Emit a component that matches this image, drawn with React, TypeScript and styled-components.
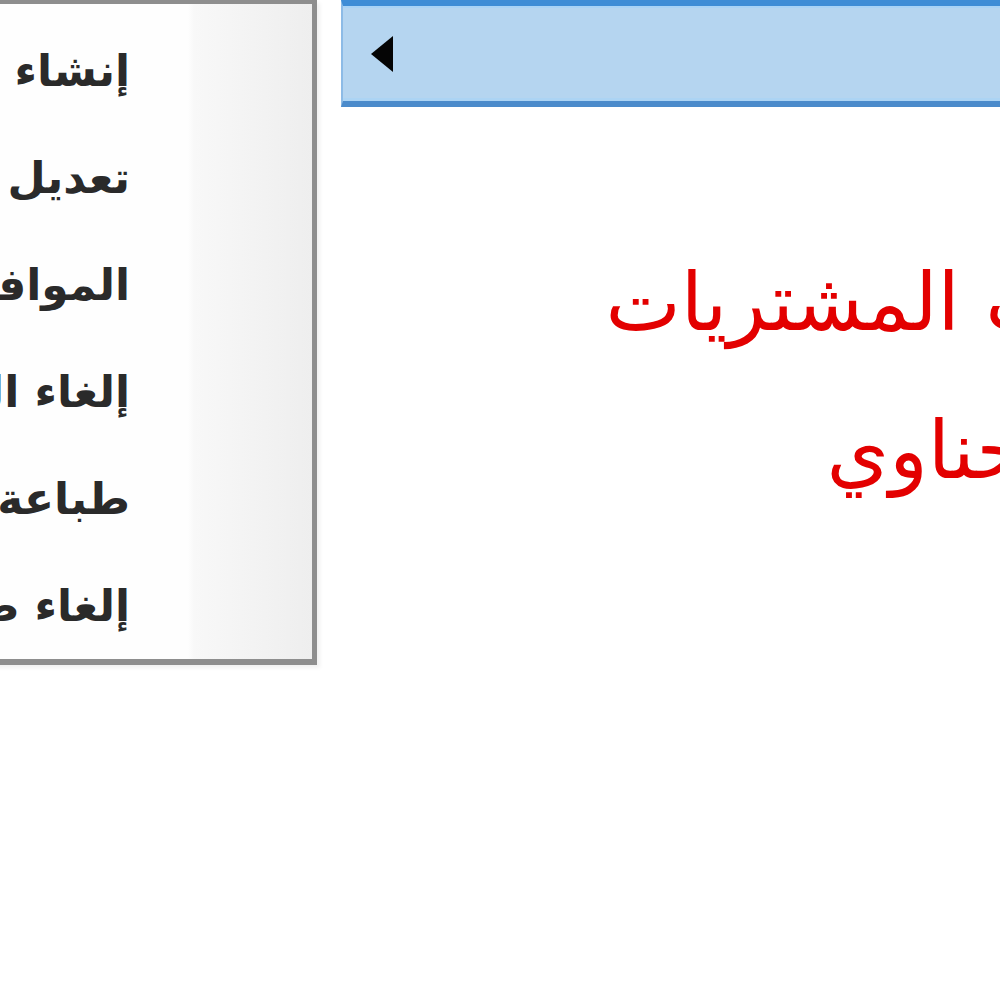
import styled, { createGlobalStyle } from "styled-components"

const Global = createGlobalStyle`
  html, body {
    margin: 0;
    padding: 0;
    background: #ffffff;
    overflow: hidden;
  }
`

const Page = styled.div`
  display: flex;
  align-items: flex-start;
  width: 1000px;
  height: 1000px;
  overflow: hidden;
  background: #ffffff;
`

const Menu = styled.div`
  flex: none;
  width: 452px;
  margin-left: -144px;
  border: 4px solid #8e8e8e;
  border-right-width: 5px;
  border-bottom-width: 6px;
  padding-top: 13px;
  background: linear-gradient(
    to right,
    #fefefe 0,
    #fefefe 328px,
    #f8f8f8 334px,
    #eeeeee 100%
  );
  box-shadow: 3px 3px 4px rgba(0, 0, 0, 0.06);
`

const Item = styled.div`
  direction: rtl;
  height: 107px;
  line-height: 107px;
  padding-right: 182px;
  white-space: nowrap;
  overflow: hidden;
  font-family: "DejaVu Sans", sans-serif;
  font-size: 44px;
  font-weight: 700;
  color: #2a2a2a;
`

const Main = styled.div`
  flex: 1;
  min-width: 0;
  margin-left: 24px;
  display: flex;
  flex-direction: column;
`

const Bar = styled.div`
  height: 95px;
  display: flex;
  align-items: center;
  padding-left: 28px;
  background: #b5d5f0;
  border-top: 6px solid #3f8dd6;
  border-bottom: 6px solid #4b8bcb;
  border-left: 2px solid #8dbbe6;
  box-shadow: inset 0 2px 0 #a9d3f6, inset 0 -3px 0 #acd4f4;
`

const Arrow = styled.span`
  width: 0;
  height: 0;
  border-top: 18px solid transparent;
  border-bottom: 18px solid transparent;
  border-right: 22px solid #050505;
`

const Title = styled.div`
  margin-top: 122px;
  margin-right: -175px;
  direction: rtl;
  text-align: right;
  font-family: "DejaVu Sans", sans-serif;
  font-size: 80px;
  line-height: 148px;
  color: #e30000;
  white-space: nowrap;
`

const items = [
  "إنشاء طلب شراء",
  "تعديل طلب الشراء",
  "الموافقة على الطلب",
  "إلغاء الموافقة",
  "طباعة الطلب",
  "إلغاء طباعة الطلب",
]

export default function App() {
  return (
    <Page>
      <Global />
      <Menu>
        {items.map((label) => (
          <Item key={label}>{label}</Item>
        ))}
      </Menu>
      <Main>
        <Bar>
          <Arrow />
        </Bar>
        <Title>
          <div>مكتب المشتريات</div>
          <div>م. الحناوي</div>
        </Title>
      </Main>
    </Page>
  )
}
